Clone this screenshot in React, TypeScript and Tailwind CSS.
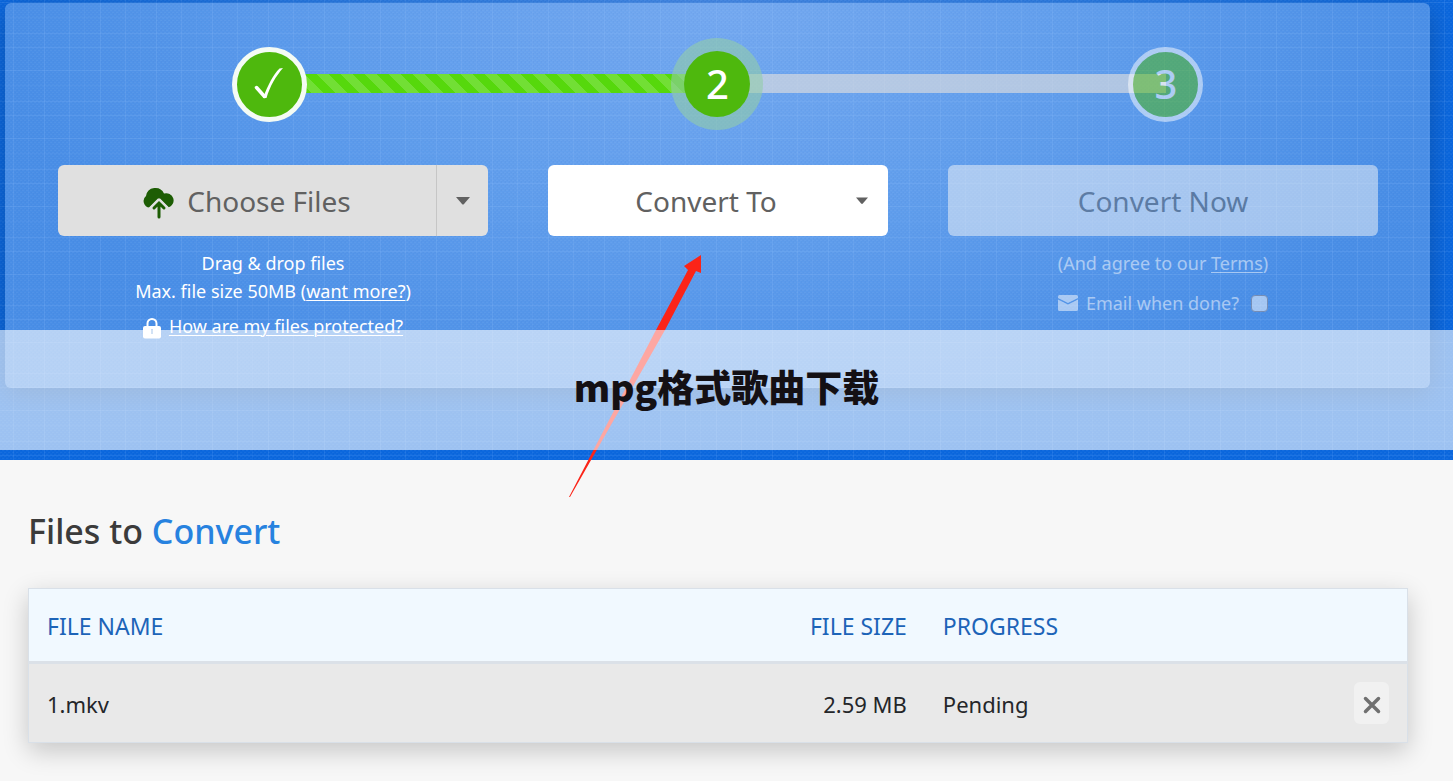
import type { ReactNode } from 'react'

const files = [{ name: '1.mkv', size: '2.59 MB', progress: 'Pending' }]

function Texture() {
  return (
    <svg className="absolute inset-0 w-full h-full pointer-events-none" aria-hidden="true">
      <defs>
        <pattern id="weave" width="4" height="4" patternUnits="userSpaceOnUse">
          <path d="M0 .5H2M2 2.5H4" stroke="#fff" strokeOpacity=".04" />
          <path d="M1.5 1V3M3.5 0V1" stroke="#003a90" strokeOpacity=".06" />
        </pattern>
        <pattern id="threads" width="56" height="68" patternUnits="userSpaceOnUse">
          <path d="M44.5 0V68M13.5 0V68M0 2.5H56M0 33.5H56M0 47.5H56" stroke="#7db8ff" strokeOpacity=".14" />
          <path d="M28.5 0V68M0 17.5H56" stroke="#7db8ff" strokeOpacity=".06" />
        </pattern>
      </defs>
      <rect width="100%" height="100%" fill="url(#weave)" />
      <rect width="100%" height="100%" fill="url(#threads)" />
    </svg>
  )
}

function Caret({ className }: { className: string }) {
  return (
    <svg viewBox="0 0 14 8" className={className} fill="currentColor" aria-hidden="true">
      <path d="M0 0H14L8 7Q7 8 6 7Z" />
    </svg>
  )
}

function Steps() {
  return (
    <ol className="relative grid grid-cols-3 items-center justify-items-center h-[92px] px-10 text-[40px] font-medium text-white">
      <li className="absolute inset-x-10 top-9 grid grid-cols-6 h-[19px]" aria-hidden="true">
        <span className="col-start-2 col-span-2 bg-[#56d80c] bg-[linear-gradient(45deg,rgba(255,255,255,.17)_25%,transparent_25%,transparent_50%,rgba(255,255,255,.17)_50%,rgba(255,255,255,.17)_75%,transparent_75%)] bg-size-[24px_24px]" />
        <span className="col-span-2 bg-[#e8e2dd]/60" />
      </li>
      <li className="relative flex items-center justify-center size-[75px] rounded-full border-5 border-[#f4fbf4] bg-[#4eb80d]">
        <svg viewBox="0 0 30 34" className="w-[30px] h-[34px]" fill="none" stroke="#fff" aria-label="Done">
          <path d="M2.5 20.5L10.5 29.5" strokeWidth="3.5" strokeLinecap="round" />
          <path d="M9 31C14 18 19 8 25.5 1.5L29 1C22 9 16 19 12.5 31Z" fill="#fff" stroke="none" />
        </svg>
      </li>
      <li className="relative flex items-center justify-center size-[92px] rounded-full bg-[#93cda8]/60">
        <span className="flex items-center justify-center size-[66px] rounded-full bg-[#4eb80d]">2</span>
      </li>
      <li className="relative flex items-center justify-center size-[75px] rounded-full border-5 border-white bg-[#4eb80d] opacity-50">3</li>
    </ol>
  )
}

function Link({ children }: { children: ReactNode }) {
  return (
    <a href="#" className="underline underline-offset-2 decoration-1">
      {children}
    </a>
  )
}

function Converter() {
  return (
    <div className="h-[385px] ml-[5px] mr-[23px] pt-[35px] rounded-md bg-white/25 shadow-[0_6px_24px_rgba(0,0,0,0.22)]">
      <Steps />
      <div className="grid grid-cols-[43fr_34fr_43fr] items-start gap-[60px] mt-[35px] pl-[53px] pr-[52px] text-center text-[18px] leading-7 text-white">
        <div>
          <div className="flex h-[71px] rounded-md overflow-hidden bg-[#e0e0e0] text-[#616161]">
            <button className="flex flex-1 items-center justify-center gap-3 text-[28px]">
              <svg viewBox="0 0 32 32" className="w-8 h-8 mt-1" aria-hidden="true">
                <path
                  d="M6.5 20.5A6.5 6.5 0 0 1 3 9A9.5 9.5 0 0 1 21 6.5A7 7 0 1 1 25.5 20.5L16 11Z"
                  fill="#1d5d04"
                />
                <path d="M16 12.5L7 21.5M16 12.5L25 21.5" stroke="#e0e0e0" strokeWidth="3" />
                <path d="M16 30V17M11 21L16 16L21 21" stroke="#1d5d04" strokeWidth="3" strokeLinecap="round" fill="none" />
              </svg>
              Choose Files
            </button>
            <button className="flex items-center justify-center w-[52px] border-l border-[#c6c6c6]" aria-label="More sources">
              <Caret className="w-3.5 h-2" />
            </button>
          </div>
          <p className="mt-[13px]">Drag &amp; drop files</p>
          <p>
            Max. file size 50MB (<Link>want more?</Link>)
          </p>
          <p className="flex items-center justify-center gap-2 mt-[7px]">
            <svg viewBox="0 0 18 21" className="w-[18px] h-[21px] mt-1" aria-hidden="true">
              <path d="M4.5 9V5.5A4.5 4.5 0 0 1 13.5 5.5V9" fill="none" stroke="#fff" strokeWidth="2" />
              <rect y="8" width="18" height="12.5" rx="2" fill="#fff" />
              <path d="M8 11.5H10V16H8Z" fill="#8fb6e6" />
            </svg>
            <Link>How are my files protected?</Link>
          </p>
        </div>

        <div className="relative">
          <select
            aria-label="Convert To"
            className="block w-full h-[71px] pl-4 pr-10 rounded-md bg-white appearance-none text-center text-[28px] text-[#616161]"
          >
            <option>Convert To</option>
          </select>
          <Caret className="absolute right-5 top-8 w-3 h-2 text-[#616161] pointer-events-none" />
        </div>

        <div className="opacity-50">
          <button className="w-full h-[71px] rounded-md bg-[#f8f8f8] text-[28px] text-[#616161]">Convert Now</button>
          <p className="mt-[13px]">
            (And agree to our <Link>Terms</Link>)
          </p>
          <label className="flex items-center justify-center gap-2 mt-3">
            <svg viewBox="0 0 20 16" className="w-5 h-4" aria-hidden="true">
              <path d="M1.5 0H18.5Q20 0 20 1.5V3L10 8L0 3V1.5Q0 0 1.5 0Z" fill="#fff" />
              <path d="M0 4.5L10 9.5L20 4.5V14.5Q20 16 18.5 16H1.5Q0 16 0 14.5Z" fill="#fff" />
            </svg>
            Email when done?
            <input type="checkbox" className="size-[17px] ml-1 appearance-none rounded-sm border border-[#a08c85] bg-white" />
          </label>
        </div>
      </div>
    </div>
  )
}

export default function App() {
  return (
    <div className="min-h-screen bg-[#f7f7f7] font-['Noto_Sans',sans-serif]">
      <header className="relative h-[460px] pt-[3px] bg-[radial-gradient(50%_100%_at_50%_0%,#468ceb_0%,#2b7de6_50%,#0c68de_100%)]">
        <Texture />
        <div className="relative">
          <Converter />
        </div>
        <svg viewBox="0 0 134 245" className="absolute left-1/2 top-[253px] -ml-[159px] w-[134px] h-[245px] pointer-events-none" aria-hidden="true">
          <path d="M1 244L88 77L120 17L116 13L133 2V20L128 18L97 77L2 244Z" fill="#fb2418" />
        </svg>
        <div className="absolute inset-x-0 bottom-2.5 flex items-center justify-center h-[120px] pb-2 bg-white/60">
          <h1 className="font-['Noto_Sans_CJK_SC',sans-serif] text-[37px] leading-none font-black text-[#141014]">mpg格式歌曲下载</h1>
        </div>
      </header>

      <main className="pl-7 pr-[45px] pt-[47px] pb-10">
        <h2 className="text-[34px] leading-[48px] font-medium text-[#3b3b3b]">
          Files to <span className="text-[#2782df]">Convert</span>
        </h2>
        <table className="w-full mt-[33px] text-left text-[22px] border border-[#d9e0e8] shadow-[0_8px_24px_rgba(0,0,0,0.2)]">
          <thead className="bg-[#f1f9ff] text-[23px] text-[#1d64b8]">
            <tr className="h-[74px] border-b-3 border-[#dbe1e8]">
              <th className="w-1/2 px-[18px] pt-0.5 font-normal">FILE NAME</th>
              <th className="w-[15%] px-[18px] pt-0.5 text-right font-normal">FILE SIZE</th>
              <th className="w-1/4 px-[18px] pt-0.5 font-normal">PROGRESS</th>
              <th className="w-[10%] px-[18px]" aria-label="Actions" />
            </tr>
          </thead>
          <tbody className="bg-[#e9e9e9] text-[#242629]">
            {files.map((file) => (
              <tr key={file.name} className="h-20">
                <td className="px-[18px] pt-0.5">{file.name}</td>
                <td className="px-[18px] pt-0.5 text-right">{file.size}</td>
                <td className="px-[18px] pt-0.5">{file.progress}</td>
                <td className="px-[18px] text-right">
                  <button className="inline-flex items-center justify-center w-[35px] h-[42px] rounded-md bg-[#f1f1f1] align-middle" aria-label={`Remove ${file.name}`}>
                    <svg viewBox="0 0 18 18" className="size-[18px] mt-1" stroke="#707070" strokeWidth="3.5" strokeLinecap="round">
                      <path d="M2.5 2.5L15.5 15.5M15.5 2.5L2.5 15.5" />
                    </svg>
                  </button>
                </td>
              </tr>
            ))}
          </tbody>
        </table>
      </main>
    </div>
  )
}
